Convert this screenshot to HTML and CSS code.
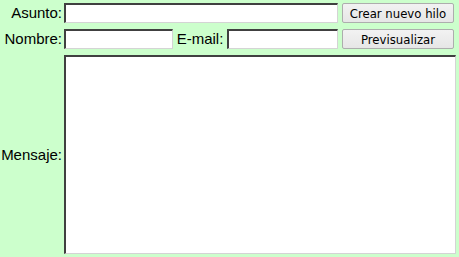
FILE: index.html
```html
<!DOCTYPE html>
<html lang="es">
<head>
    <meta charset="UTF-8">
    <meta name="viewport" content="width=device-width, initial-scale=1.0">
    <title>Nuevo hilo</title>
    <link rel="stylesheet" href="styles.css">
</head>
<body>
    <form class="post-form" id="post-form">
        <label class="field-label" for="subject">Asunto:</label>
        <input type="text" id="subject" name="subject" class="field-input">
        <button type="submit" class="form-button">Crear nuevo hilo</button>

        <label class="field-label" for="name">Nombre:</label>
        <div class="name-row">
            <input type="text" id="name" name="name" class="field-input name-input">
            <label class="field-label inline-label" for="email">E-mail:</label>
            <input type="text" id="email" name="email" class="field-input email-input">
        </div>
        <button type="button" class="form-button">Previsualizar</button>

        <label class="field-label message-label" for="message">Mensaje:</label>
        <textarea id="message" name="message" class="field-input message-input"></textarea>
    </form>
</body>
</html>
```

FILE: styles.css
```css
html, body {
    background-color: #ccffcc;
}

body {
    margin: 0;
    padding: 3px 0 0 0;
    font-family: 'Liberation Sans', Arial, sans-serif;
    font-size: 15px;
    color: #000;
}

.post-form {
    display: grid;
    grid-template-columns: 62px 274px 116px;
    grid-template-rows: 20px 20px 199px;
    column-gap: 2px;
    row-gap: 6px;
}

.field-label {
    text-align: right;
    align-self: center;
    line-height: 20px;
}

.field-input {
    box-sizing: border-box;
    margin: 0;
    height: 20px;
    width: 100%;
    padding: 1px 3px;
    background: white;
    border-style: solid;
    border-width: 2px 1px 1px 2px;
    border-color: #404040 #d4d4d4 #d4d4d4 #404040;
    font-family: 'Liberation Sans', Arial, sans-serif;
    font-size: 13px;
    outline: none;
}

.name-row {
    display: flex;
    align-items: center;
    justify-content: space-between;
}

.name-input {
    width: 109px;
}

.email-input {
    width: 111px;
}

.inline-label {
    flex: 1;
    text-align: center;
}

.form-button {
    justify-self: start;
    width: 112px;
    height: 20px;
    margin: 0 0 0 2px;
    padding: 0;
    background: linear-gradient(#f2f2f2, #e6e6e6);
    border: 1px solid #adadad;
    border-radius: 2px;
    font-family: 'DejaVu Sans Condensed', 'DejaVu Sans', sans-serif;
    font-size: 13px;
    color: #000;
    cursor: pointer;
}

.form-button:hover {
    background: #e5f1fb;
}

.message-input {
    grid-column: 2 / 4;
    height: 199px;
    resize: none;
}
```
